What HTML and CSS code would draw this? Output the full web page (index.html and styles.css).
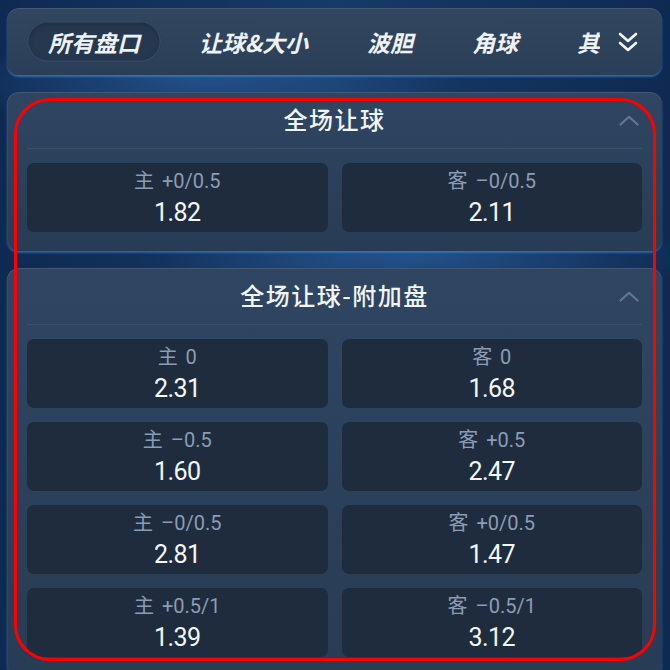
FILE: index.html
```html
<!DOCTYPE html>
<html lang="zh-CN">
<head>
<meta charset="utf-8">
<title>盘口</title>
<link rel="stylesheet" href="styles.css">
</head>
<body>
<div class="page">
  <nav class="tabs">
    <div class="tab-list">
      <span class="tab active">所有盘口</span>
      <span class="tab">让球&amp;大小</span>
      <span class="tab">波胆</span>
      <span class="tab">角球</span>
      <span class="tab last">其</span>
    </div>
    <div class="more">
      <svg width="20" height="22" viewBox="0 0 20 22"><path d="M2 3 L10 10 L18 3 M2 12 L10 19 L18 12" fill="none" stroke="#f2f5f9" stroke-width="2.6" stroke-linecap="round" stroke-linejoin="round"/></svg>
    </div>
  </nav>

  <section class="card">
    <header class="card-head">
      <h2 class="card-title">全场让球</h2>
      <svg class="collapse" width="20" height="11" viewBox="0 0 20 11"><path d="M1.5 9.5 L10 1.8 L18.5 9.5" fill="none" stroke="#66778c" stroke-width="2.2" stroke-linecap="round" stroke-linejoin="round"/></svg>
    </header>
    <div class="grid">
      <div class="cell"><span class="label">主 +0/0.5</span><span class="odds">1.82</span></div>
      <div class="cell"><span class="label">客 –0/0.5</span><span class="odds">2.11</span></div>
    </div>
  </section>

  <section class="card">
    <header class="card-head">
      <h2 class="card-title">全场让球-附加盘</h2>
      <svg class="collapse" width="20" height="11" viewBox="0 0 20 11"><path d="M1.5 9.5 L10 1.8 L18.5 9.5" fill="none" stroke="#66778c" stroke-width="2.2" stroke-linecap="round" stroke-linejoin="round"/></svg>
    </header>
    <div class="grid">
      <div class="cell"><span class="label">主 0</span><span class="odds">2.31</span></div>
      <div class="cell"><span class="label">客 0</span><span class="odds">1.68</span></div>
      <div class="cell"><span class="label">主 –0.5</span><span class="odds">1.60</span></div>
      <div class="cell"><span class="label">客 +0.5</span><span class="odds">2.47</span></div>
      <div class="cell"><span class="label">主 –0/0.5</span><span class="odds">2.81</span></div>
      <div class="cell"><span class="label">客 +0/0.5</span><span class="odds">1.47</span></div>
      <div class="cell"><span class="label">主 +0.5/1</span><span class="odds">1.39</span></div>
      <div class="cell"><span class="label">客 –0.5/1</span><span class="odds">3.12</span></div>
    </div>
  </section>

  <div class="highlight"></div>
</div>
</body>
</html>
```

FILE: styles.css
```css
* { box-sizing: border-box; }
html, body {
  margin: 0;
  padding: 0;
  width: 670px;
  height: 670px;
  overflow: hidden;
  background: #10284b;
  font-family: "Noto Sans CJK SC", "Noto Sans", sans-serif;
}
.page {
  position: relative;
  width: 670px;
  height: 670px;
  padding: 8px 8px 0 7px;
  display: flex;
  flex-direction: column;
  gap: 17px;
  background:
    radial-gradient(ellipse 380px 60px at 200px 82px, rgba(60,130,210,0.35), transparent 70%),
    radial-gradient(ellipse 400px 60px at 420px 258px, rgba(60,130,210,0.35), transparent 70%),
    linear-gradient(90deg, #0f2a52 0%, #173a68 50%, #0f2a52 100%);
}

/* nav */
.tabs {
  height: 67px;
  flex: none;
  border-radius: 12px;
  background: linear-gradient(180deg, #32475f 0%, #2b3e57 100%);
  box-shadow: inset 0 1px 0 rgba(255,255,255,0.10), 0 2px 2px rgba(70,150,235,0.55);
  display: flex;
  align-items: center;
  padding-left: 20px;
  overflow: hidden;
}
.tab-list {
  flex: 1;
  display: flex;
  align-items: center;
  gap: 17px;
  overflow: hidden;
  white-space: nowrap;
  height: 41px;
}
.tab {
  flex: none;
  height: 41px;
  padding: 0 21px;
  display: flex;
  align-items: center;
  font-size: 23px;
  font-weight: 600;
  font-style: italic;
  color: #eef2f7;
  border-radius: 21px;
}
.tab.last { padding-right: 0; }
.tab.active {
  background: #26384f;
  box-shadow: inset 0 0 0 1.5px #34496a, inset 0 2px 6px rgba(0,0,0,0.25);
}
.more {
  flex: none;
  width: 62px;
  height: 67px;
  display: flex;
  align-items: center;
  padding-left: 18px;
}

/* cards */
.card {
  flex: none;
  border-radius: 12px;
  background: linear-gradient(180deg, #2f4562 0%, #293c55 100%);
  box-shadow: inset 0 1px 0 rgba(255,255,255,0.10), inset 1px 0 0 rgba(255,255,255,0.05), 0 2px 2px rgba(70,150,235,0.5);
  padding: 0 20px 19px;
}
.card-head {
  position: relative;
  height: 57px;
  border-bottom: 1px solid #3b5069;
  display: flex;
  align-items: center;
  justify-content: center;
  margin-bottom: 14px;
}
.card-title {
  margin: 0;
  font-size: 24px;
  font-weight: 500;
  letter-spacing: 1.5px;
  color: #f1f4f8;
  line-height: 1;
  padding-bottom: 2px;
}
.collapse {
  position: absolute;
  right: 3px;
  top: 23px;
}
.grid {
  display: grid;
  grid-template-columns: 1fr 1fr;
  column-gap: 14px;
  row-gap: 14px;
}
.cell {
  height: 69px;
  border-radius: 7px;
  background: #1f2c3e;
  display: flex;
  flex-direction: column;
  align-items: center;
}
.label {
  margin-top: 7px;
  line-height: 22px;
  font-family: "Roboto", "Noto Sans CJK SC", sans-serif;
  font-size: 20px;
  word-spacing: 3px;
  color: #8b9db4;
}
.odds {
  margin-top: 6px;
  line-height: 30px;
  font-family: "Roboto", "Noto Sans CJK SC", sans-serif;
  font-size: 25px;
  font-weight: 400;
  letter-spacing: -0.5px;
  color: #f4f7fa;
}

/* annotation overlay */
.highlight {
  position: absolute;
  left: 14px;
  top: 98px;
  width: 642px;
  height: 563px;
  border: 3px solid #ff0000;
  border-radius: 36px;
  pointer-events: none;
}
```
